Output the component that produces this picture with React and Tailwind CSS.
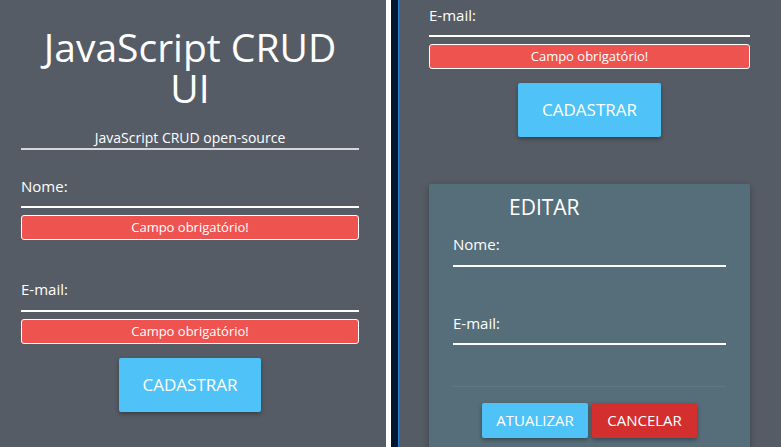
export default function App() {
  return (
    <div className="flex h-[447px] w-[781px] overflow-hidden bg-[#565c65] text-white font-['Open_Sans',sans-serif]">
      {/* Left panel */}
      <div className="w-[386px] shrink-0 pl-[21px] pr-[27px]">
        <h1 className="pt-[26px] text-center text-[39px] leading-[41px] font-normal">JavaScript CRUD UI</h1>
        <p className="mt-[20px] border-b-2 border-[#d4d6d8] text-center text-[14px] leading-[20px]">JavaScript CRUD open-source</p>
        <label className="mt-[26px] block text-[15px] leading-[20px]">Nome:</label>
        <div className="h-[12px] border-b-2 border-white" />
        <div className="mt-[7px] h-[25px] rounded-[3px] border border-white bg-[#ef5350] text-center text-[13px] leading-[23px]">Campo obrigatório!</div>
        <label className="mt-[39px] block text-[15px] leading-[20px]">E-mail:</label>
        <div className="h-[13px] border-b-2 border-white" />
        <div className="mt-[7px] h-[25px] rounded-[3px] border border-white bg-[#ef5350] text-center text-[13px] leading-[23px]">Campo obrigatório!</div>
        <button className="mx-auto mt-[14px] block h-[54px] w-[142px] rounded-[2px] bg-[#4fc3f7] text-[17px] shadow-[0_2px_4px_rgba(0,0,0,0.35)]">CADASTRAR</button>
      </div>
      {/* Divider */}
      <div className="w-[5px] shrink-0 bg-white" />
      <div className="w-[7px] shrink-0 bg-[#01162c]" />
      <div className="w-px shrink-0 bg-[#2b82d9]" />
      {/* Right panel */}
      <div className="flex-1 pl-[30px] pr-[31px]">
        <label className="pt-[5px] block text-[15px] leading-[20px]">E-mail:</label>
        <div className="h-[12px] border-b-2 border-white" />
        <div className="mt-[7px] h-[25px] rounded-[3px] border border-white bg-[#ef5350] text-center text-[13px] leading-[23px]">Campo obrigatório!</div>
        <button className="mx-auto mt-[14px] block h-[54px] w-[143px] rounded-[2px] bg-[#4fc3f7] text-[17px] shadow-[0_2px_4px_rgba(0,0,0,0.35)]">CADASTRAR</button>
        <div className="mt-[47px] h-[300px] rounded-[2px] bg-[#566e7a] px-[24px] pt-[9px] shadow-[0_2px_6px_rgba(0,0,0,0.3)]">
          <h2 className="ml-[56px] text-[21px] leading-[28px]">EDITAR</h2>
          <label className="mt-[13px] block text-[15px] leading-[20px]">Nome:</label>
          <div className="h-[13px] border-b-2 border-white" />
          <label className="mt-[46px] block text-[15px] leading-[20px]">E-mail:</label>
          <div className="h-[12px] border-b-2 border-white" />
          <div className="mt-[41px] h-px bg-[#617882]" />
          <div className="mt-[16px] flex justify-center gap-[4px]">
            <button className="h-[35px] w-[106px] rounded-[2px] bg-[#4fc3f7] text-[15px] shadow-[0_2px_4px_rgba(0,0,0,0.35)]">ATUALIZAR</button>
            <button className="h-[35px] w-[105px] rounded-[2px] bg-[#d32f2f] text-[15px] shadow-[0_2px_4px_rgba(0,0,0,0.35)]">CANCELAR</button>
          </div>
        </div>
      </div>
    </div>
  );
}
